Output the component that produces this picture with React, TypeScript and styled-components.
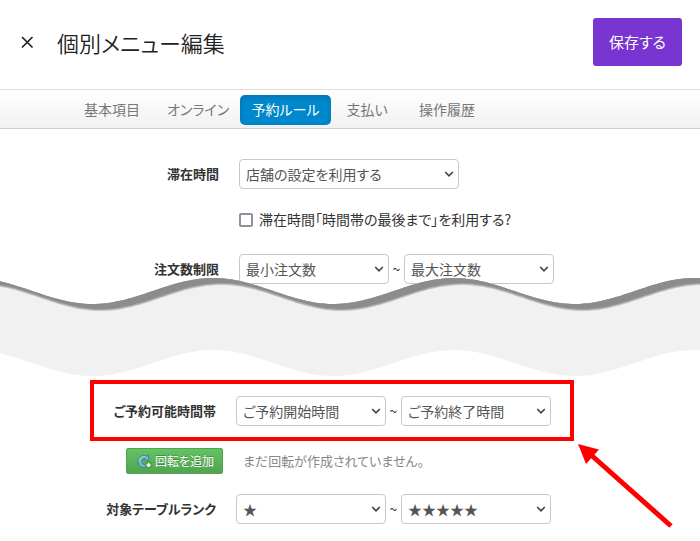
import React from "react";
import styled, { createGlobalStyle, css } from "styled-components";

const GlobalStyle = createGlobalStyle`
  *, *::before, *::after { box-sizing: border-box; }
  body {
    margin: 0;
    background: #fff;
    color: #333;
    font-family: "Noto Sans CJK JP", "Noto Sans", sans-serif;
    font-feature-settings: "palt";
    font-size: 14px;
    line-height: 20px;
    overflow-x: hidden;
  }
  button, select, input { font: inherit; font-feature-settings: inherit; }
`;

const Header = styled.header`
  display: flex;
  align-items: center;
  gap: 22px;
  padding: 18px 18px 23px 20px;
`;

const CloseButton = styled.button`
  display: flex;
  padding: 0;
  border: 0;
  background: none;
  color: #222;
  cursor: pointer;
`;

const Title = styled.h1`
  flex: 1;
  margin: 0;
  font-size: 22px;
  line-height: 32px;
  font-weight: 350;
  color: #222;
`;

const SaveButton = styled.button`
  height: 48px;
  padding: 0 16px;
  border: 0;
  border-radius: 3px;
  background: #7835d2;
  color: #fff;
  font-size: 15px;
  cursor: pointer;
`;

const TabBar = styled.nav`
  display: grid;
  grid-template-columns: 88px 84px 91px 72px 88px;
  align-items: start;
  height: 40px;
  padding: 5px 0 0 68px;
  border-top: 1px solid #dedede;
  border-bottom: 1px solid #cfcfcf;
  background: linear-gradient(#fff, #f1f1f1);
`;

const Tab = styled.a<{ $active?: boolean }>`
  padding: 4px 0 6px;
  border-radius: 5px;
  color: #777;
  text-align: center;
  text-decoration: none;
  ${(p) =>
    p.$active &&
    css`
      background: #0088cc;
      box-shadow: inset 0 2px 6px rgba(0, 0, 0, 0.15);
      color: #fff;
    `}
`;

const Section = styled.section<{ $lower?: boolean }>`
  --label: ${(p) => (p.$lower ? "216px" : "219px")};
  display: grid;
  gap: ${(p) => (p.$lower ? "7px" : "20px")};
  padding-top: ${(p) => (p.$lower ? "0" : "30px")};
`;

const Row = styled.div`
  display: grid;
  grid-template-columns: var(--label) 1fr;
  column-gap: 20px;
  align-items: center;
`;

const LastRow = styled(Row)`
  margin: 13px 0 17px;
`;

const Label = styled.label`
  font-size: 13px;
  font-weight: 600;
  text-align: right;
  white-space: nowrap;
`;

const Fields = styled.div`
  display: flex;
  align-items: center;
`;

const Tilde = styled.span`
  width: 15px;
  text-align: center;
`;

const SelectBox = styled.span<{ $wide?: boolean }>`
  display: grid;
  align-items: center;
  width: ${(p) => (p.$wide ? "220px" : "150px")};

  & > * { grid-area: 1 / 1; }
  & > svg {
    justify-self: end;
    margin-right: 5px;
    pointer-events: none;
  }
`;

const NativeSelect = styled.select`
  appearance: none;
  width: 100%;
  height: 30px;
  padding: 0 20px 1px 6px;
  border: 1px solid #c8c8c8;
  border-radius: 4px;
  background: #fff;
  color: #555;
`;

const CheckLabel = styled.label`
  grid-column: 2;
  display: flex;
  align-items: center;
  gap: 6px;
  padding-bottom: 5px;
`;

const Checkbox = styled.input`
  appearance: none;
  width: 14px;
  height: 14px;
  margin: 2px 0 0;
  border: 2px solid #8f8f9d;
  border-radius: 2px;
  background: #fff;
  &:checked { background: #0088cc; }
`;

const Divider = styled.svg`
  position: relative;
  display: block;
  width: 100%;
  height: 104px;
  margin-top: -8px;
  overflow: hidden;
`;

const Highlight = styled.div`
  --label: 122px;
  position: relative;
  width: 484px;
  margin-left: 90px;
  padding: 12px 0 11px;
  border: 4px solid #f00;
`;

const Arrow = styled.svg`
  position: absolute;
  left: calc(100% + 8px);
  top: calc(100% + 7px);
  pointer-events: none;
`;

const AddCell = styled.div`
  display: flex;
  justify-content: flex-end;
  margin-right: -7px;
`;

const AddButton = styled.button`
  display: flex;
  align-items: center;
  gap: 2px;
  height: 26px;
  padding: 0 8px 0 9px;
  border: 1px solid #51a351;
  border-radius: 2px;
  background: linear-gradient(#62c462, #51a351);
  color: #fff;
  font-size: 12px;
  text-shadow: 0 -1px 0 rgba(0, 0, 0, 0.25);
  white-space: nowrap;
  cursor: pointer;
`;

const Note = styled.p`
  margin: 0;
  padding-left: 7px;
  font-size: 13px;
  color: #888;
`;

function Chevron() {
  return (
    <svg width="10" height="8" viewBox="0 0 10 8" fill="none" aria-hidden="true">
      <path d="M1.2 2 5 5.8 8.8 2" stroke="#444" strokeWidth="1.7" />
    </svg>
  );
}

function Select(props: { id?: string; name: string; text: string; wide?: boolean }) {
  return (
    <SelectBox $wide={props.wide}>
      <NativeSelect id={props.id} aria-label={props.id ? undefined : props.name}>
        <option>{props.text}</option>
      </NativeSelect>
      <Chevron />
    </SelectBox>
  );
}

function RangeFields(props: { id: string; from: string; to: string; name: string }) {
  return (
    <Fields>
      <Select id={props.id} name={props.name} text={props.from} />
      <Tilde>~</Tilde>
      <Select name={props.name} text={props.to} />
    </Fields>
  );
}

const PERIOD = 241;
const CREST = 213;

/* Points of a wave whose crest sits at `top`, long enough for wide windows. */
function wave(top: number, shift = 0): string[] {
  const points: string[] = [];
  for (let x = -20; x <= 4000; x += 4) {
    const angle = ((x - CREST - shift) / PERIOD) * Math.PI * 2;
    points.push(`${x} ${(top + 13 - 13 * Math.cos(angle)).toFixed(1)}`);
  }
  return points;
}

const band = (top: string[], bottom: string[]) =>
  `M${top.join("L")}L${[...bottom].reverse().join("L")}Z`;

function WaveDivider() {
  const edge = wave(2);
  const base = wave(74);
  return (
    <Divider aria-hidden="true">
      <path d={band(edge, base)} fill="#f1f1f1" />
      <path d={band(edge, wave(9, 8))} fill="#c4c4c4" />
      <path d={band(edge, wave(8, 8))} fill="#a6a6a6" />
      <path d={band(edge, wave(7, 8))} fill="#8c8c8c" />
    </Divider>
  );
}

function RotateAddIcon() {
  return (
    <svg width="17" height="16" viewBox="0 0 17 16" aria-hidden="true">
      <path
        d="M10.8 3.4 12.6 1.8 12.8 7.4 7.6 7 9.2 5.5C6.8 5.2 5.6 6.8 5.8 8.8c.2 2 1.8 3.2 4.2 3.2v2.6C5.4 15.2 2 12.6 2 8.4 2 3.8 6.4 1 10.8 3.4Z"
        fill="#6fb9cc"
        stroke="#34788f"
        strokeWidth=".8"
      />
      <path d="M3.4 8.4C3.4 5 6.6 2.8 10 4" fill="none" stroke="#a9dce6" />
      <circle cx="12.6" cy="12" r="3.2" fill="#6cae4e" stroke="#3f8735" strokeWidth=".6" />
      <path d="M12.6 10v4M10.6 12h4" stroke="#fff" strokeWidth="1.4" />
    </svg>
  );
}

const tabs = ["基本項目", "オンライン", "予約ルール", "支払い", "操作履歴"];

export default function App() {
  return (
    <>
      <GlobalStyle />
      <Header>
        <CloseButton type="button" aria-label="閉じる">
          <svg width="15" height="14" viewBox="0 0 15 14" aria-hidden="true">
            <path d="M2 2 12.5 12.5M12.5 2 2 12.5" stroke="currentColor" strokeWidth="1.7" />
          </svg>
        </CloseButton>
        <Title>個別メニュー編集</Title>
        <SaveButton type="button">保存する</SaveButton>
      </Header>
      <TabBar>
        {tabs.map((name) => (
          <Tab key={name} href="#" $active={name === "予約ルール"}>
            {name}
          </Tab>
        ))}
      </TabBar>
      <main>
        <Section>
          <Row>
            <Label htmlFor="stay">滞在時間</Label>
            <Select id="stay" name="滞在時間" text="店舗の設定を利用する" wide />
          </Row>
          <Row>
            <CheckLabel>
              <Checkbox type="checkbox" />
              滞在時間「時間帯の最後まで」を利用する?
            </CheckLabel>
          </Row>
          <Row>
            <Label htmlFor="orders">注文数制限</Label>
            <RangeFields id="orders" name="注文数制限" from="最小注文数" to="最大注文数" />
          </Row>
        </Section>
        <WaveDivider />
        <Section $lower>
          <Highlight>
            <Row>
              <Label htmlFor="hours">ご予約可能時間帯</Label>
              <RangeFields id="hours" name="ご予約可能時間帯" from="ご予約開始時間" to="ご予約終了時間" />
            </Row>
            <Arrow width="98" height="86" viewBox="0 0 98 86" aria-hidden="true">
              <path d="M12 10 93 82" stroke="#f00" strokeWidth="5" />
              <path d="M0 0 21 5.5 8 20Z" fill="#f00" />
            </Arrow>
          </Highlight>
          <Row>
            <AddCell>
              <AddButton type="button">
                <RotateAddIcon />
                回転を追加
              </AddButton>
            </AddCell>
            <Note>まだ回転が作成されていません。</Note>
          </Row>
          <LastRow>
            <Label htmlFor="rank">対象テーブルランク</Label>
            <RangeFields id="rank" name="対象テーブルランク" from="★" to="★★★★★" />
          </LastRow>
        </Section>
      </main>
    </>
  );
}
